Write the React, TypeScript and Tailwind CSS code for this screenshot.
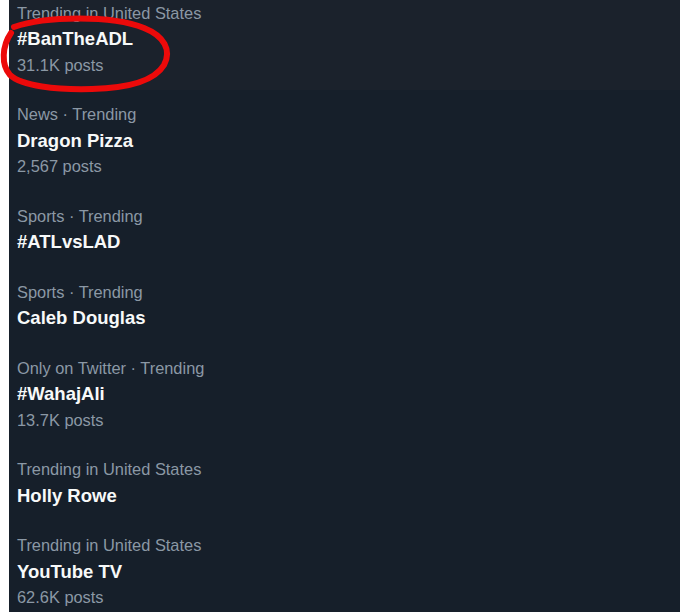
const trends = [
  { category: "Trending in United States", title: "#BanTheADL", posts: "31.1K posts", hover: true },
  { category: "News · Trending", title: "Dragon Pizza", posts: "2,567 posts" },
  { category: "Sports · Trending", title: "#ATLvsLAD" },
  { category: "Sports · Trending", title: "Caleb Douglas" },
  { category: "Only on Twitter · Trending", title: "#WahajAli", posts: "13.7K posts" },
  { category: "Trending in United States", title: "Holly Rowe" },
  { category: "Trending in United States", title: "YouTube TV", posts: "62.6K posts" },
];

// hand-drawn marker loop around the first trend
function RedCircle() {
  return (
    <svg className="absolute left-0 top-[10px] pointer-events-none" width="180" height="90" viewBox="0 10 180 90">
      <path
        d="M14 27 C 45 16, 112 15, 144 28 C 164 36, 172 50, 164 65 C 155 80, 130 88, 92 89 C 56 90, 22 86, 10 75 C 1 65, 2 46, 11 33"
        fill="none"
        stroke="#ec0a0a"
        strokeWidth="6"
        strokeLinecap="round"
      />
    </svg>
  );
}

export default function App() {
  return (
    <div className="w-[680px] h-[612px] overflow-hidden bg-white flex" style={{ fontFamily: '"Liberation Sans", Arial, sans-serif' }}>
      <div className="w-[9px] shrink-0 bg-white" />
      <div className="flex-1 bg-[#161f2a] relative">
        <div className="-mt-[12px] flex flex-col">
          {trends.map((t, i) => (
            <div
              key={i}
              className={`px-[8px] pt-[12.5px] ${t.posts ? "pb-[12px]" : "pb-[12.5px]"} ${t.hover ? "bg-[#1b222c]" : ""}`}
            >
              <div className="text-[16.4px] leading-[25.5px] text-[#8b98a5] whitespace-nowrap">{t.category}</div>
              <div className="text-[18.5px] leading-[25.5px] font-bold text-[#f7f9f9] whitespace-nowrap">{t.title}</div>
              {t.posts && (
                <div className="text-[16.4px] leading-[26px] text-[#8b98a5] whitespace-nowrap">{t.posts}</div>
              )}
            </div>
          ))}
        </div>
        <div className="absolute -left-[9px] top-0">
          <RedCircle />
        </div>
      </div>
    </div>
  );
}
